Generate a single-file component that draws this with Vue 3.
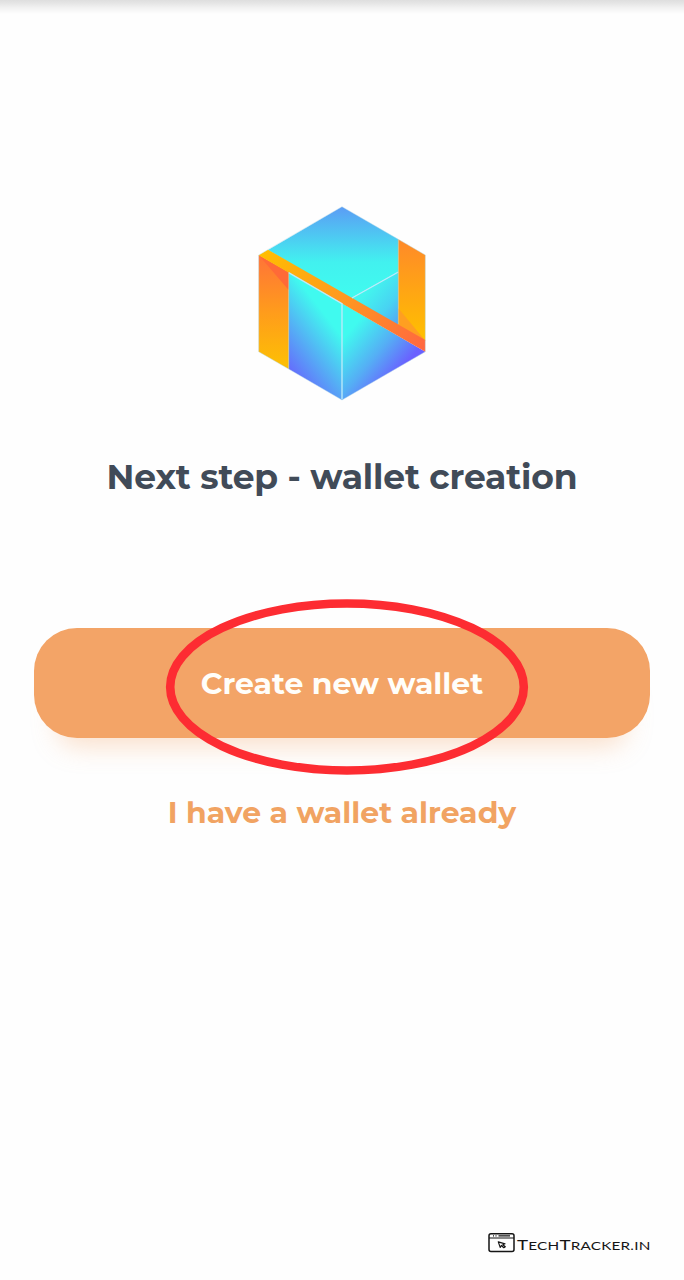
<script setup>
const title = 'Next step - wallet creation'
</script>

<template>
  <main class="screen">
    <svg class="logo" viewBox="0 0 600 645" aria-hidden="true">
      <defs>
        <linearGradient id="top" x1="300" y1="32" x2="300" y2="300" gradientUnits="userSpaceOnUse">
          <stop offset="0" stop-color="#5b9cf5" />
          <stop offset=".62" stop-color="#42f1ef" />
          <stop offset="1" stop-color="#40fbef" />
        </linearGradient>
        <linearGradient id="left" x1="260" y1="370" x2="116" y2="481" gradientUnits="userSpaceOnUse">
          <stop offset="0" stop-color="#40faef" />
          <stop offset=".55" stop-color="#55aef5" />
          <stop offset="1" stop-color="#6470fc" />
        </linearGradient>
        <linearGradient id="right" x1="340" y1="385" x2="504" y2="523" gradientUnits="userSpaceOnUse">
          <stop offset="0" stop-color="#40faef" />
          <stop offset=".5" stop-color="#55aef5" />
          <stop offset=".9" stop-color="#6a60ff" />
        </linearGradient>
        <linearGradient id="side" x1="375" y1="285" x2="485" y2="375" gradientUnits="userSpaceOnUse">
          <stop offset="0" stop-color="#43f5ee" />
          <stop offset=".55" stop-color="#48d3f2" />
          <stop offset="1" stop-color="#559ff4" />
        </linearGradient>
        <linearGradient id="pillarL" x1="0" y1="190" x2="0" y2="500" gradientUnits="userSpaceOnUse">
          <stop offset="0" stop-color="#ff7636" />
          <stop offset=".5" stop-color="#ff9b1c" />
          <stop offset="1" stop-color="#fdbd06" />
        </linearGradient>
        <linearGradient id="pillarR" x1="0" y1="130" x2="0" y2="430" gradientUnits="userSpaceOnUse">
          <stop offset="0" stop-color="#ff8929" />
          <stop offset="1" stop-color="#ffc000" />
        </linearGradient>
        <linearGradient id="band" x1="60" y1="165" x2="550" y2="450" gradientUnits="userSpaceOnUse">
          <stop offset="0" stop-color="#ffbe00" />
          <stop offset=".5" stop-color="#ff9820" />
          <stop offset="1" stop-color="#ff6740" />
        </linearGradient>
      </defs>
      <path d="M300 32 469 130V228L325 308 78 162Z" fill="url(#top)" />
      <path d="M140 229 300 322V612L140 519Z" fill="url(#left)" />
      <path d="M300 322 550 467 300 612Z" fill="url(#right)" />
      <path d="M325 308 469 228V388Z" fill="url(#side)" />
      <path d="M50 177 140 229V519L50 467Z" fill="url(#pillarL)" />
      <path d="M50 177 140 229V282Z" fill="#ff6a37" />
      <path d="M469 130 550 177V434L469 388Z" fill="url(#pillarR)" />
      <path d="M469 337 550 434 469 388Z" fill="#ff9f21" />
      <path d="M78 161 550 432V467L50 178Z" fill="url(#band)" />
      <path d="M140 230 300 323V610M330 306 469 228" fill="none" stroke="#bceafa" stroke-width="4" />
      <path d="M140 229V519M469 130V384" fill="none" stroke="#c2c5a0" stroke-width="2" />
      <path d="M300 32 550 177V467L300 612 50 467V177Z" fill="none" stroke="#b8dce8" stroke-width="2" opacity=".65" />
    </svg>

    <h1 class="title">{{ title }}</h1>

    <div class="primary">
      <button class="create">Create new wallet</button>
      <svg class="ring" viewBox="0 0 364 178" aria-hidden="true">
        <ellipse cx="182" cy="89" rx="176.8" ry="83.5" fill="none" stroke="#fd2c32" stroke-width="8.6" />
      </svg>
    </div>

    <button class="existing">I have a wallet already</button>

    <footer class="credit">
      <svg class="credit-mark" viewBox="0 0 166 24">
        <rect x="2" y="1.8" width="25" height="17.6" rx="2" fill="none" stroke="#151515" stroke-width="1.5" />
        <path d="M2 6H27" stroke="#151515" stroke-width="1" />
        <path d="M6 3.9H7M8.5 3.9H9.5M11.5 3.9H23" stroke="#151515" stroke-width="1.2" />
        <path d="M11.3 9.9 18 11.8 15.8 12.7 18.3 14.7 16.8 15.7 14.4 13.5 13.2 15.4Z" fill="none" stroke="#151515" stroke-width="1.2" stroke-linejoin="round" />
        <g class="credit-text" transform="translate(30 17.5) scale(1.34 1)">
          <text textLength="99.5" lengthAdjust="spacing">T<tspan class="small">ECH</tspan>T<tspan class="small">RACKER.IN</tspan></text>
        </g>
      </svg>
    </footer>
  </main>
</template>

<style>
body {
  background: #fefefe;
}
</style>

<style scoped>
.screen {
  box-sizing: border-box;
  width: 684px;
  height: 1280px;
  padding: 196px 34px 24px;
  display: flex;
  flex-direction: column;
  align-items: center;
  overflow: hidden;
  background: linear-gradient(#dedede 0, #e5e5e5 3px, #f2f2f2 8px, #fefefe 14px) #fefefe;
  font-family: Montserrat, Inter, "Open Sans", sans-serif;
}

.logo {
  width: 200px;
  height: 215px;
  flex: none;
}

.title {
  margin: 44px 0 0;
  height: 44px;
  line-height: 44px;
  font-size: 34.5px;
  font-weight: 700;
  letter-spacing: -0.16px;
  white-space: nowrap;
  color: #414b58;
}

.primary {
  position: relative;
  margin-top: 129px;
  width: 616px;
  height: 110px;
  flex: none;
}

button {
  border: 0;
  padding: 0;
  font: inherit;
  font-weight: 700;
  white-space: nowrap;
}

.create {
  width: 100%;
  height: 100%;
  border-radius: 43px;
  background: #f3a467;
  color: #fffefa;
  font-size: 29.9px;
  box-shadow: 0 32px 26px -24px rgba(243, 164, 103, 0.34);
}

.ring {
  position: absolute;
  left: 131px;
  top: -30px;
  width: 364px;
  height: 178px;
}

.existing {
  margin-top: 52px;
  height: 44px;
  background: transparent;
  color: #f1a362;
  font-size: 29.9px;
}

.credit {
  margin-top: auto;
  margin-right: -3px;
  align-self: flex-end;
  height: 24px;
}

.credit-mark {
  display: block;
  width: 166px;
  height: 24px;
}

.credit-text {
  font-family: Lato, "Open Sans", sans-serif;
  font-size: 14px;
  fill: #151515;
}

.small {
  font-size: 11.4px;
}
</style>
